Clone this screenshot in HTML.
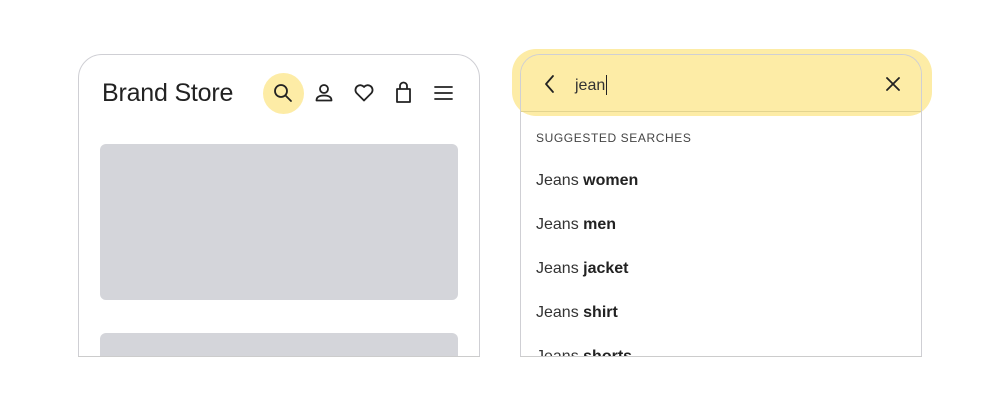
<!DOCTYPE html>
<html><head><style>
html,body{margin:0;width:1000px;height:417px;overflow:hidden}
body{background:#fff;position:relative;font-family:"Liberation Sans",sans-serif;color:#222}
.clip{position:absolute;overflow:hidden;border-bottom:1px solid #ccc}
.card{position:absolute;left:0;top:0;right:0;height:400px;border:1px solid #cfcfd4;border-radius:24px;box-sizing:border-box}
.g{position:absolute;background:#d4d5da;border-radius:6px}
.row{position:absolute;left:16px;font-size:16px;color:#333}
.row b{color:#222}
svg{position:absolute}
</style></head><body>
<div class="clip" style="left:78px;top:54px;width:402px;height:302px">
 <div class="card"></div>
 <div style="position:absolute;left:24px;top:25px;font-size:25px;color:#222;letter-spacing:-0.2px">Brand Store</div>
 <div style="position:absolute;left:185px;top:19px;width:41px;height:41px;border-radius:50%;background:#fdeca6"></div>
 <svg style="left:0;top:0" width="402" height="80" fill="none" stroke="#222" stroke-width="1.8" stroke-linecap="round" stroke-linejoin="round">
  <circle cx="203" cy="37" r="6"/><path d="M207.5 41.5L213 47"/>
  <circle cx="246" cy="35" r="4"/><path d="M238.5 46.5q0-5 7.5-5t7.5 5z"/>
  <path d="M286 46.5l-7.5-7.5a4.8 4.8 0 0 1 7.5-6a4.8 4.8 0 0 1 7.5 6z"/>
  <path d="M319 35h13v13h-13z M322 35v-3a3.5 3.5 0 0 1 7 0v3"/>
  <path d="M357 33h17M357 39h17M357 45h17"/>
 </svg>
 <div class="g" style="left:22px;top:90px;width:358px;height:156px"></div>
 <div class="g" style="left:22px;top:279px;width:358px;height:100px"></div>
</div>
<div style="position:absolute;left:512px;top:49px;width:420px;height:67px;border-radius:24px;background:#fdeca6"></div>
<div class="clip" style="left:520px;top:54px;width:402px;height:302px">
 <div class="card" style="border-radius:20px;height:302px;border-bottom:none;border-radius:20px 20px 0 0"></div>
 <div style="position:absolute;left:1px;right:1px;top:1px;height:56px;border-radius:19px 19px 0 0;background:#fdeca6;border-bottom:1px solid #e3d48f"></div>
 <svg style="left:0;top:0" width="402" height="60" fill="none" stroke="#222" stroke-width="1.8" stroke-linecap="round" stroke-linejoin="round">
  <path d="M33 22l-7 8 7 8"/>
  <path d="M367 24l12 12M379 24l-12 12"/>
 </svg>
 <div style="position:absolute;left:55px;top:21px;font-size:16px;color:#333">jean<span style="border-left:1.5px solid #222;margin-left:1px;display:inline-block;height:20px;vertical-align:-5px"></span></div>
 <div style="position:absolute;left:16px;top:77px;font-size:12px;letter-spacing:0.6px;color:#444">SUGGESTED SEARCHES</div>
 <div class="row" style="top:118px">Jeans <b>women</b></div>
 <div class="row" style="top:162px">Jeans <b>men</b></div>
 <div class="row" style="top:206px">Jeans <b>jacket</b></div>
 <div class="row" style="top:250px">Jeans <b>shirt</b></div>
 <div class="row" style="top:294px">Jeans <b>shorts</b></div>
</div>
</body></html>
